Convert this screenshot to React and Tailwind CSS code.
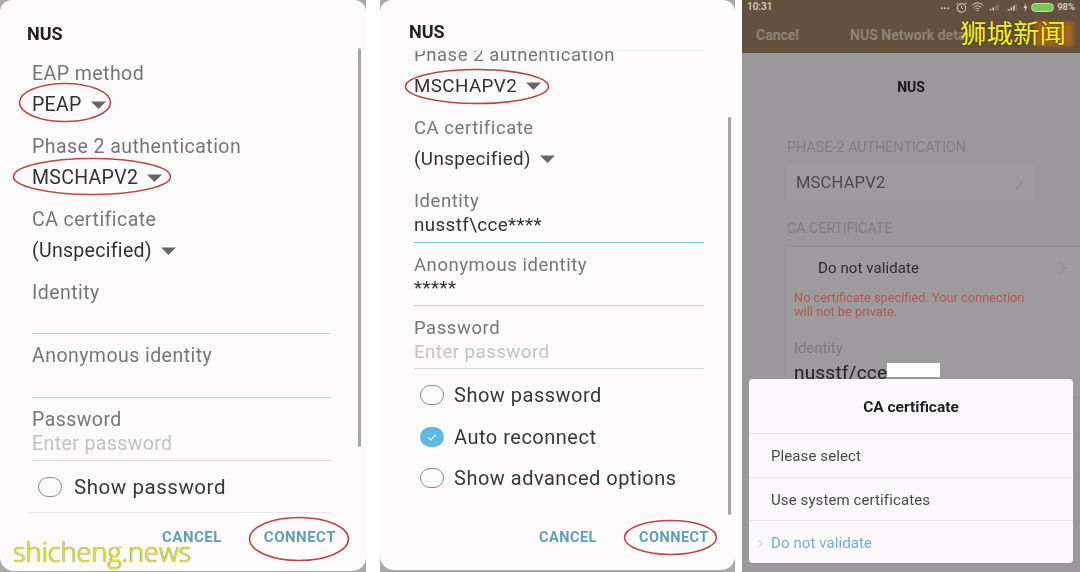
import React from "react";

const font = { fontFamily: "Roboto, 'Noto Sans', sans-serif" };

function Caret() {
  return (
    <svg width="17" height="10" viewBox="0 0 17 10" className="ml-2 shrink-0">
      <path d="M1 1.5 H16 L8.5 9 Z" fill="#666468" />
    </svg>
  );
}

function Label({ children, cls = "" }) {
  return <div className={"leading-[22px] text-[#77757a] " + cls}>{children}</div>;
}

function Select({ children, cls = "" }) {
  return (
    <div className={"flex items-center leading-[22px] text-[#333135] " + cls}>
      {children}
      <Caret />
    </div>
  );
}

function Check({ on, label, cls = "", gap = "ml-[10px]" }) {
  return (
    <div className={"flex items-center h-[22px] " + cls}>
      {on ? (
        <div className="w-[24px] h-[20px] rounded-full bg-[#5eb8e0] flex items-center justify-center">
          <svg width="12" height="10" viewBox="0 0 12 10"><path d="M2 5.5 L4.8 8 L10 2.5" stroke="#eaf6fb" strokeWidth="1.2" fill="none" /></svg>
        </div>
      ) : (
        <div className="w-[24px] h-[20px] rounded-full border-[1.5px] border-[#8b898d] bg-transparent" />
      )}
      <span className={gap + " leading-[22px] text-[#39373b]"}>{label}</span>
    </div>
  );
}

function Ring({ x, y, w, h }) {
  return (
    <svg className="absolute pointer-events-none" style={{ left: x, top: y }} width={w} height={h} viewBox={`0 0 ${w} ${h}`}>
      <ellipse cx={w / 2} cy={h / 2} rx={w / 2 - 1.5} ry={h / 2 - 1.5} fill="none" stroke="#b5474a" strokeWidth="1.6" />
    </svg>
  );
}

function Buttons({ cls, cancelCls, connectCls }) {
  return (
    <div className={"flex leading-[18px] font-bold tracking-[0.5px] text-[#5f9fb0] " + cls}>
      <span className={cancelCls}>CANCEL</span>
      <span className={connectCls}>CONNECT</span>
    </div>
  );
}

const L1 = "text-[19.5px] tracking-[0.45px] ";
const S1 = "text-[19.5px] tracking-[0.3px] ";
const L2 = "text-[18.5px] tracking-[0.55px] ";
const S2 = "text-[18.8px] tracking-[0.4px] ";

function PanelOne() {
  return (
    <div className="relative w-[366px] h-[572px] shrink-0 bg-[#a9a8aa]">
      <div className="h-[571px] bg-[#fdfafc] rounded-t-[12px] rounded-b-[14px] pl-[32px] pr-[35px] blur-[0.5px]">
        <div className="pt-[24px] -ml-[5px] text-[18px] leading-[20px] font-bold text-[#232125]">NUS</div>
        <Label cls={L1 + "mt-[19px]"}>EAP method</Label>
        <Select cls={S1 + "mt-[9px]"}>PEAP</Select>
        <Label cls={L1 + "mt-[20px]"}>Phase 2 authentication</Label>
        <Select cls={S1 + "mt-[9px]"}>MSCHAPV2</Select>
        <Label cls={L1 + "mt-[20px]"}>CA certificate</Label>
        <Select cls={S1 + "mt-[9px]"}>(Unspecified)</Select>
        <Label cls={L1 + "mt-[20px]"}>Identity</Label>
        <div className="mt-[29px] h-px bg-[#a8d3e2]" />
        <Label cls={L1 + "mt-[11px]"}>Anonymous identity</Label>
        <div className="mt-[30px] h-px bg-[#cfcdd0]" />
        <Label cls={L1 + "mt-[11px]"}>Password</Label>
        <div className="mt-[2px] text-[19.5px] leading-[22px] tracking-[0.4px] text-[#c3c1c5]">Enter password</div>
        <div className="mt-[5px] h-px bg-[#d8d6d9]" />
        <Check label="Show password" gap="ml-[12px]" cls="mt-[15px] ml-[6px] text-[20.5px] tracking-[0.55px]" />
        <div className="mt-[14px] -ml-[4px] h-px bg-[#ebe9ec]" />
        <Buttons cls="text-[15px]" cancelCls="ml-[130px] mt-[15px]" connectCls="ml-[42px] mt-[15px]" />
      </div>
      <div className="absolute left-[358px] top-[48px] w-[3px] h-[399px] rounded-full bg-[#a5a4a7]" />
      <Ring x={18} y={82} w={94} h={41} />
      <Ring x={12} y={157} w={160} h={39} />
      <Ring x={248} y={516} w={102} h={46} />
      <div className="absolute left-[13px] top-[532px] text-[27.3px] leading-[40px] font-light tracking-[-0.1px] text-[#e8ea2c] [text-shadow:0_0_1px_#3a3a10] whitespace-nowrap" style={{ fontFamily: "'Open Sans', sans-serif" }}>shicheng.news</div>
    </div>
  );
}

function PanelTwo() {
  return (
    <div className="relative ml-[14px] w-[355px] h-[572px] shrink-0 bg-[#a9a8aa]">
      <div className="h-[570px] bg-[#fdfafc] rounded-t-[12px] rounded-b-[14px] pl-[34px] pr-[31px] overflow-hidden blur-[0.5px]">
        <div className="pt-[22px] -ml-[5px] text-[18px] leading-[20px] font-bold text-[#232125]">NUS</div>
        <div className="mt-[8px] h-[23px] overflow-hidden border-t border-[#eeecef]">
          <Label cls={L2 + "-mt-[7px]"}>Phase 2 authentication</Label>
        </div>
        <Select cls={S2 + "mt-[2px]"}>MSCHAPV2</Select>
        <Label cls={L2 + "mt-[20px]"}>CA certificate</Label>
        <Select cls={S2 + "mt-[9px]"}>(Unspecified)</Select>
        <Label cls={L2 + "mt-[20px]"}>Identity</Label>
        <div className="mt-[2px] text-[18.8px] leading-[22px] tracking-[0.4px] text-[#333135]">nusstf\cce****</div>
        <div className="mt-[6px] h-px bg-[#7fc0d8]" />
        <Label cls={L2 + "mt-[11px]"}>Anonymous identity</Label>
        <div className="mt-[1px] text-[18.8px] leading-[22px] tracking-[0.4px] text-[#333135]">*****</div>
        <div className="mt-[6px] h-px bg-[#cfcdd0]" />
        <Label cls={L2 + "mt-[11px]"}>Password</Label>
        <div className="mt-[2px] text-[18.8px] leading-[22px] tracking-[0.4px] text-[#c3c1c5]">Enter password</div>
        <div className="mt-[5px] h-px bg-[#d8d6d9]" />
        <Check label="Show password" cls="mt-[15px] ml-[6px] text-[20px] tracking-[0.5px]" />
        <Check on label="Auto reconnect" cls="mt-[20px] ml-[6px] text-[20px] tracking-[0.5px]" />
        <Check label="Show advanced options" cls="mt-[19px] ml-[6px] text-[20px] tracking-[0.5px]" />
        <Buttons cls="text-[14.5px]" cancelCls="ml-[125px] mt-[40px]" connectCls="ml-[42px] mt-[40px]" />
      </div>
      <div className="absolute left-[348px] top-[117px] w-[3px] h-[398px] rounded-full bg-[#a5a4a7]" />
      <Ring x={24} y={68} w={146} h={37} />
      <Ring x={243} y={519} w={95} h={37} />
    </div>
  );
}

function Chevron({ color = "#8b888c", w = 8, h = 14 }) {
  return (
    <svg width={w} height={h} viewBox="0 0 8 14" className="shrink-0">
      <path d="M1 1 L7 7 L1 13" fill="none" stroke={color} strokeWidth="1" />
    </svg>
  );
}

function StatusIcons() {
  return (
    <div className="flex items-center text-[#d8d3cd]">
      <span className="w-[9px] text-[11px] leading-none font-bold -mt-[3px]">...</span>
      <svg width="13" height="13" viewBox="0 0 14 13" className="ml-[6px]"><circle cx="7" cy="7" r="4.6" fill="none" stroke="#d8d3cd" strokeWidth="1.1" /><path d="M7 4.5V7L8.6 8M1.6 2.8L3.5 1M12.4 2.8L10.5 1" fill="none" stroke="#d8d3cd" strokeWidth="1" /></svg>
      <svg width="13" height="10" viewBox="0 0 15 11" className="ml-[3px]"><path d="M1 3.5C5 0 10 0 14 3.5M3.2 5.8C5.8 3.5 9.2 3.5 11.8 5.8M5.4 8C6.6 7 8.4 7 9.6 8" fill="none" stroke="#d8d3cd" strokeWidth="1.1" /><path d="M6.2 9L7.5 10.6L8.8 9Z" fill="#d8d3cd" /></svg>
      <svg width="10" height="8" viewBox="0 0 13 9" className="ml-[5px]"><path d="M1 9H3V7H1ZM4.5 9H6.5V5H4.5Z" fill="#d8d3cd" /><path d="M8 9H10V2.5H8ZM11 9H12.5V0.5H11Z" fill="#8a7868" /></svg>
      <svg width="10" height="8" viewBox="0 0 13 9" className="ml-[8px]"><path d="M1 9H3V7H1ZM4.5 9H6.5V5H4.5ZM8 9H10V2.5H8Z" fill="#d8d3cd" /><path d="M11 9H12.5V0.5H11Z" fill="#8a7868" /></svg>
      <svg width="5" height="9" viewBox="0 0 6 10" className="ml-[6px]"><path d="M3.5 0L0.5 5.5H2.6L2 10L5.5 4H3.2Z" fill="#d8d3cd" /></svg>
      <div className="w-[23px] h-[9px] ml-[3px] rounded-full bg-[#74c75a] border border-[#cfd8c4]" />
      <span className="ml-[3px] text-[9.5px] leading-none font-semibold">98%</span>
    </div>
  );
}

function PanelThree() {
  return (
    <div className="relative ml-[7px] w-[338px] h-[572px] shrink-0 bg-[#9b989c] overflow-hidden">
      <div className="h-[53px] bg-[#64503f]">
        <div className="h-[14px] pl-[5px] pr-[5px] flex items-center justify-between">
          <span className="text-[10px] leading-none font-medium text-[#d8d3cd]">10:31</span>
          <StatusIcons />
        </div>
        <div className="mt-[13px] pl-[14px] flex items-center text-[14px] leading-[16px] font-bold text-[#8f8274]">
          <span>Cancel</span>
          <span className="ml-[51px] whitespace-nowrap">NUS Network details</span>
        </div>
      </div>
      <div className="blur-[0.5px]">
        <div className="mt-[26px] text-center text-[14px] leading-[16px] font-bold text-[#17151a]">NUS</div>
        <div className="mt-[44px] ml-[45px] text-[14.5px] leading-[18px] tracking-[-0.1px] text-[#817f83]">PHASE-2 AUTHENTICATION</div>
        <div className="mt-[8px] ml-[45px] mr-[46px] h-[36px] pl-[9px] pr-[11px] flex items-center justify-between bg-[#9e9b9f]">
          <span className="text-[16.5px] leading-[20px] tracking-[0.2px] text-[#4b494d]">MSCHAPV2</span>
          <Chevron />
        </div>
        <div className="mt-[19px] ml-[45px] text-[14.5px] leading-[18px] tracking-[-0.2px] text-[#817f83]">CA CERTIFICATE</div>
        <div className="mt-[8px] ml-[45px] h-[150px] bg-[#9e9b9f] border-t border-[#8f8d91]">
          <div className="h-[42px] pl-[31px] pr-[11px] mr-[3px] flex items-center justify-between">
            <span className="text-[15px] leading-[18px] tracking-[0.1px] text-[#2d2b2f]">Do not validate</span>
            <Chevron />
          </div>
          <div className="mt-[2px] pl-[7px] text-[12.8px] leading-[14px] text-[#ad5a52] whitespace-nowrap">No certificate specified. Your connection<br />will not be private.</div>
          <div className="mt-[20px] pl-[7px] text-[14.8px] leading-[18px] text-[#7b797d]">Identity</div>
          <div className="mt-[5px] pl-[7px] flex items-start text-[19px] leading-[22px] tracking-[0.2px] text-[#222024]">
            <span>nusstf/cce</span>
            <span className="w-[53px] h-[14px] mt-[1px] bg-white" />
          </div>
        </div>
      </div>
      <div className="absolute left-[7px] top-[379px] w-[324px] h-[184px] rounded-[4px] bg-[#fbf8fb] blur-[0.4px] flex flex-col">
        <div className="h-[55px] pt-[3px] flex items-center justify-center text-[15.5px] font-bold text-[#1e1c20] border-b border-[#ece9ec]">CA certificate</div>
        <div className="h-[44px] pt-[2px] pl-[22px] flex items-center text-[15px] tracking-[0.1px] text-[#4a484c] border-b border-[#ece9ec]">Please select</div>
        <div className="h-[43px] pt-[2px] pl-[22px] flex items-center text-[15px] tracking-[0.1px] text-[#4a484c] border-b border-[#ece9ec]">Use system certificates</div>
        <div className="h-[42px] pt-[3px] pl-[9px] flex items-center text-[15px] tracking-[0.1px] text-[#77acd0]">
          <Chevron color="#77acd0" w={5} h={9} />
          <span className="ml-[8px]">Do not validate</span>
        </div>
      </div>
      <div className="absolute left-[293px] top-[22px] w-[38px] h-[24px] bg-[#a8651f] blur-[2px]" />
      <div className="absolute left-[218px] top-[14px] text-[26.5px] leading-[36px] text-[#f2f02a] [text-shadow:0_0_2px_#3b3000] whitespace-nowrap" style={{ fontFamily: "'Noto Sans CJK SC', sans-serif" }}>狮城新闻</div>
    </div>
  );
}

export default function App() {
  return (
    <div className="flex w-[1080px] h-[572px] overflow-hidden bg-white" style={font}>
      <PanelOne />
      <PanelTwo />
      <PanelThree />
    </div>
  );
}
